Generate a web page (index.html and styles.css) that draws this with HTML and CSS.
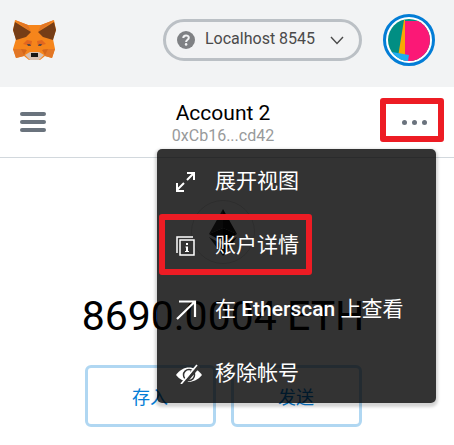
FILE: index.html
```html
<!DOCTYPE html>
<html lang="zh-CN">
<head>
<meta charset="utf-8">
<meta name="viewport" content="width=device-width, initial-scale=1">
<title>Account 2</title>
<link rel="stylesheet" href="styles.css">
</head>
<body>
<header class="top">
  <svg class="fox" viewBox="0 0 43 40" aria-hidden="true">
    <path fill="#f6851b" d="M2 0 15 5H28L41 0 43 10 40 19 42 29 39 38 32 36 27 40H16L11 36 3 38 0 29 3 19 0 10Z"/>
    <path fill="#e27625" d="M2 0 15 5 18 12ZM41 0 28 5 25 12ZM0 29 13 29 11 36 3 38ZM42 29 30 29 32 36 39 38Z"/>
    <path fill="#763d16" d="M2 2 18 12 13 17 3 20 0 10ZM41 2 25 12 30 17 40 20 43 10Z"/>
    <path fill="#e2661f" d="M10 24 14 20 19 21 18 26ZM33 24 29 20 24 21 25 26Z"/>
    <path fill="#d5671a" d="M8 29 14 30 11 35ZM35 29 29 30 32 35Z"/>
    <path fill="#5c4a45" d="M14 24 17 24 18 26 15 26ZM29 24 26 24 25 26 28 26Z"/>
    <path fill="#d7c1b3" d="M12 35 17 32H26L31 35 26 40H17Z"/>
    <path fill="#161616" d="M18 33H25V37H18Z"/>
  </svg>
  <button class="network" type="button">
    <svg class="help" viewBox="0 0 18 18" aria-hidden="true">
      <circle cx="9" cy="9" r="9" fill="#7f8184"/>
      <path d="M6.3 7C6.3 3.6 11.8 3.7 11.8 6.8 11.8 8.8 9.1 8.7 9.1 11" fill="none" stroke="#f2f3f4" stroke-width="2"/>
      <circle cx="9.1" cy="13.4" r="1.3" fill="#f2f3f4"/>
    </svg>
    <span class="network-name">Localhost 8545</span>
    <svg class="chevron" viewBox="0 0 14 9" aria-hidden="true"><path d="M1 1 7 7.5 13 1" fill="none" stroke="#4a4a4a" stroke-width="1.4"/></svg>
  </button>
  <button class="avatar" type="button" aria-label="我的账户">
    <svg viewBox="0 0 42 42" aria-hidden="true">
      <clipPath id="disc"><circle cx="21" cy="21" r="21"/></clipPath>
      <g clip-path="url(#disc)">
        <path fill="#018e83" d="M0 0H42V42H0Z"/>
        <path fill="#fb1876" d="M17 2H42V42H17Z"/>
        <path fill="#f9a602" d="M16 1H17V38H10Z"/>
        <path fill="#1fadf2" d="M4 33 21 36 20 42H0V33Z"/>
      </g>
    </svg>
  </button>
</header>

<section class="account-bar">
  <button class="hamburger" type="button" aria-label="菜单"><i></i><i></i><i></i></button>
  <div class="account">
    <h1>Account 2</h1>
    <p>0xCb16...cd42</p>
  </div>
  <div class="options">
    <button class="dots" type="button" aria-label="账户选项"><i></i><i></i><i></i></button>
    <div class="menu">
      <button type="button">
        <svg viewBox="0 0 26 20" aria-hidden="true"><path d="M11 1H18V8M17.5 1.5 11 8M8 11 1.5 17.5M1 11V19H8" fill="none" stroke="#fff" stroke-width="2"/></svg>
        <span>展开视图</span>
      </button>
      <button class="marked" type="button">
        <svg viewBox="0 0 26 20" aria-hidden="true"><path d="M1 17V1H17M4 4H18V19H4Z" fill="none" stroke="#fff" stroke-width="1.5"/><path d="M10 7H12V9H10ZM9.5 10.5H12V15H13V16H9V15H10V11.5H9.5Z" fill="#fff"/></svg>
        <span>账户详情</span>
      </button>
      <button type="button">
        <svg viewBox="0 0 26 20" aria-hidden="true"><path d="M3 1.5H19V17M18 2.5 1 19" fill="none" stroke="#fff" stroke-width="2.2"/></svg>
        <span>在 <b>Etherscan</b> 上查看</span>
      </button>
      <button type="button">
        <svg viewBox="0 0 26 20" aria-hidden="true"><path d="M0 11C7 1 19 1 26 11 19 20 7 20 0 11Z" fill="#fff"/><circle cx="13" cy="11" r="5.5" fill="none" stroke="#333" stroke-width="1.5"/><path d="M14 7A4 4 0 0 1 17 11" stroke="#333" fill="none"/><path d="M7 21 23 2" stroke="#333" stroke-width="3"/><path d="M5 20 21 1" stroke="#fff" stroke-width="1.7"/></svg>
        <span>移除帐号</span>
      </button>
    </div>
  </div>
</section>

<main class="balance">
  <svg class="eth" viewBox="0 0 64 64" aria-hidden="true">
    <circle cx="32" cy="32" r="31.5" fill="#fff" stroke="#dedede"/>
    <path fill="#343434" d="M32 9V28L18 34Z"/>
    <path fill="#141414" d="M32 9V28L46 34Z"/>
    <path fill="#141414" d="M32 28V42L18 34Z"/>
    <path fill="#000" d="M32 28V42L46 34Z"/>
    <path fill="#3c3c3b" d="M18 37 32 45V56Z"/>
    <path fill="#141414" d="M46 37 32 45V56Z"/>
  </svg>
  <p class="amount">8690.0004 ETH</p>
  <div class="actions">
    <button type="button">存入</button>
    <button type="button">发送</button>
  </div>
</main>
</body>
</html>
```
FILE: styles.css
```css
*,
*::after {
  box-sizing: border-box;
}

body {
  margin: 0;
  background: #fff;
  color: #000;
  font-family: Roboto, "Noto Sans CJK SC", sans-serif;
}

button {
  margin: 0;
  padding: 0;
  border: 0;
  background: none;
  font: inherit;
}

svg {
  display: block;
  flex: none;
}

h1,
p {
  margin: 0;
}

.top {
  display: flex;
  align-items: center;
  height: 87px;
  padding: 0 19px 7px 13px;
  background: #f2f3f4;
}

.fox {
  width: 43px;
  height: 40px;
}

.network {
  display: flex;
  align-items: center;
  width: 199px;
  height: 42px;
  margin-left: auto;
  padding: 0 15px 0 11px;
  border: 3px solid #bbc0c5;
  border-radius: 21px;
  color: #4a4a4a;
  font-size: 16px;
}

.help {
  width: 18px;
  height: 18px;
}

.network-name {
  margin-left: 10px;
  padding-bottom: 3px;
}

.chevron {
  width: 14px;
  height: 9px;
  margin-left: auto;
}

.avatar {
  width: 52px;
  height: 52px;
  margin-left: 21px;
  padding: 2px;
  border: 3px solid #037dd6;
  border-radius: 50%;
  background: #fff;
}

.account-bar {
  display: grid;
  grid-template-columns: 64px 1fr 64px;
  align-items: center;
  height: 71px;
  padding: 0 10px 4px 2px;
  border-bottom: 1px solid #d2d8dd;
}

.hamburger {
  display: grid;
  gap: 4px;
  width: 26px;
  margin: 3px 0 0 18px;
}

.hamburger i {
  height: 4px;
  border-radius: 2px;
  background: #6a737d;
}

.account {
  padding-top: 6px;
  text-align: center;
}

.account h1 {
  font-size: 21px;
  font-weight: 400;
  line-height: 26px;
}

.account p {
  color: #989a9b;
  font-size: 16px;
  line-height: 20px;
}

.options {
  position: relative;
}

.dots {
  display: flex;
  align-items: center;
  justify-content: center;
  gap: 5px;
  width: 64px;
  height: 44px;
  padding: 4px 0 0 4px;
  border: 6px solid #ed1c24;
  border-radius: 3px;
}

.dots i {
  width: 5px;
  height: 5px;
  border-radius: 50%;
  background: #6a737d;
}

.menu {
  position: absolute;
  z-index: 1;
  top: 51px;
  right: 8px;
  display: grid;
  gap: 2px;
  width: 279px;
  border-radius: 5px;
  background: rgba(0, 0, 0, 0.8);
  box-shadow: 0 2px 3px 2px rgba(0, 0, 0, 0.17);
}

.menu button {
  position: relative;
  display: flex;
  align-items: center;
  gap: 13px;
  height: 62px;
  padding: 4px 0 0 19px;
  color: #fff;
  font-size: 21px;
  white-space: nowrap;
}

.menu svg {
  width: 26px;
  height: 20px;
}

.menu span {
  padding-bottom: 7px;
}

.menu b {
  font-weight: 500;
}

.menu .marked::after {
  position: absolute;
  top: 1px;
  left: 2px;
  width: 153px;
  height: 61px;
  border: 6px solid #ed1c24;
  border-radius: 3px;
  content: "";
}

.balance {
  display: flex;
  flex-direction: column;
  align-items: center;
  padding: 42px 8px 18px 0;
}

.eth {
  width: 64px;
  height: 64px;
}

.amount {
  margin-top: 27px;
  font-size: 41px;
  line-height: 50px;
}

.actions {
  display: grid;
  grid-template-columns: 131px 131px;
  gap: 15px;
  margin-top: 24px;
}

.actions button {
  height: 62px;
  border: 3px solid #b0d7f2;
  border-radius: 6px;
  color: #037dd6;
  font-size: 18px;
}
```
